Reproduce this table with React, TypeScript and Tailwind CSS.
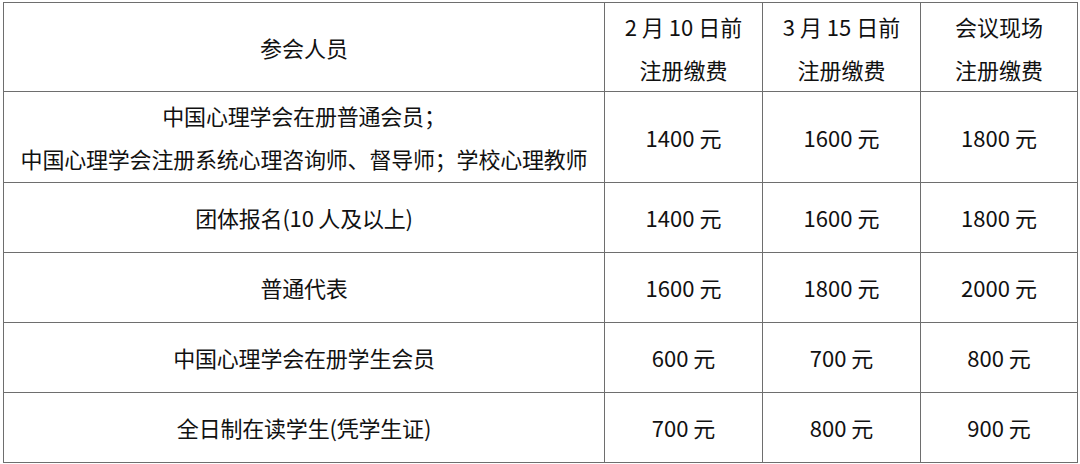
const font = { fontFamily: '"Noto Sans CJK SC", "Noto Sans", sans-serif' };

const rows = [
  { who: ["中国心理学会在册普通会员；", "中国心理学会注册系统心理咨询师、督导师；学校心理教师"], fees: ["1400 元", "1600 元", "1800 元"], h: "h-[91px]" },
  { who: ["团体报名(10 人及以上)"], fees: ["1400 元", "1600 元", "1800 元"], h: "h-[70px]" },
  { who: ["普通代表"], fees: ["1600 元", "1800 元", "2000 元"], h: "h-[70px]" },
  { who: ["中国心理学会在册学生会员"], fees: ["600 元", "700 元", "800 元"], h: "h-[70px]" },
  { who: ["全日制在读学生(凭学生证)"], fees: ["700 元", "800 元", "900 元"], h: "h-[70px]" },
];

const cell = "border border-[#6e6e6e] text-center align-middle p-0";

export default function App() {
  return (
    <div className="w-[1080px] h-[464px] bg-white pt-[2px] pl-[3px]" style={font}>
      <table className="table-fixed border-collapse w-[1074px] text-[22px] text-[#111]">
        <colgroup>
          <col className="w-[601px]" />
          <col className="w-[158px]" />
          <col className="w-[158px]" />
          <col className="w-[157px]" />
        </colgroup>
        <thead>
          <tr className="h-[89px]">
            <th className={`${cell} font-normal`}>参会人员</th>
            {[
              ["2 月 10 日前", "注册缴费"],
              ["3 月 15 日前", "注册缴费"],
              ["会议现场", "注册缴费"],
            ].map((lines, i) => (
              <th key={i} className={`${cell} font-normal leading-[43px] pt-[2px]`}>
                {lines.map((l) => (
                  <div key={l}>{l}</div>
                ))}
              </th>
            ))}
          </tr>
        </thead>
        <tbody>
          {rows.map((r, i) => (
            <tr key={i} className={r.h}>
              <td className={`${cell} leading-[43px] tracking-[-0.2px]`}>
                {r.who.map((l) => (
                  <div key={l}>{l}</div>
                ))}
              </td>
              {r.fees.map((f, j) => (
                <td key={j} className={cell}>
                  {f}
                </td>
              ))}
            </tr>
          ))}
        </tbody>
      </table>
    </div>
  );
}
